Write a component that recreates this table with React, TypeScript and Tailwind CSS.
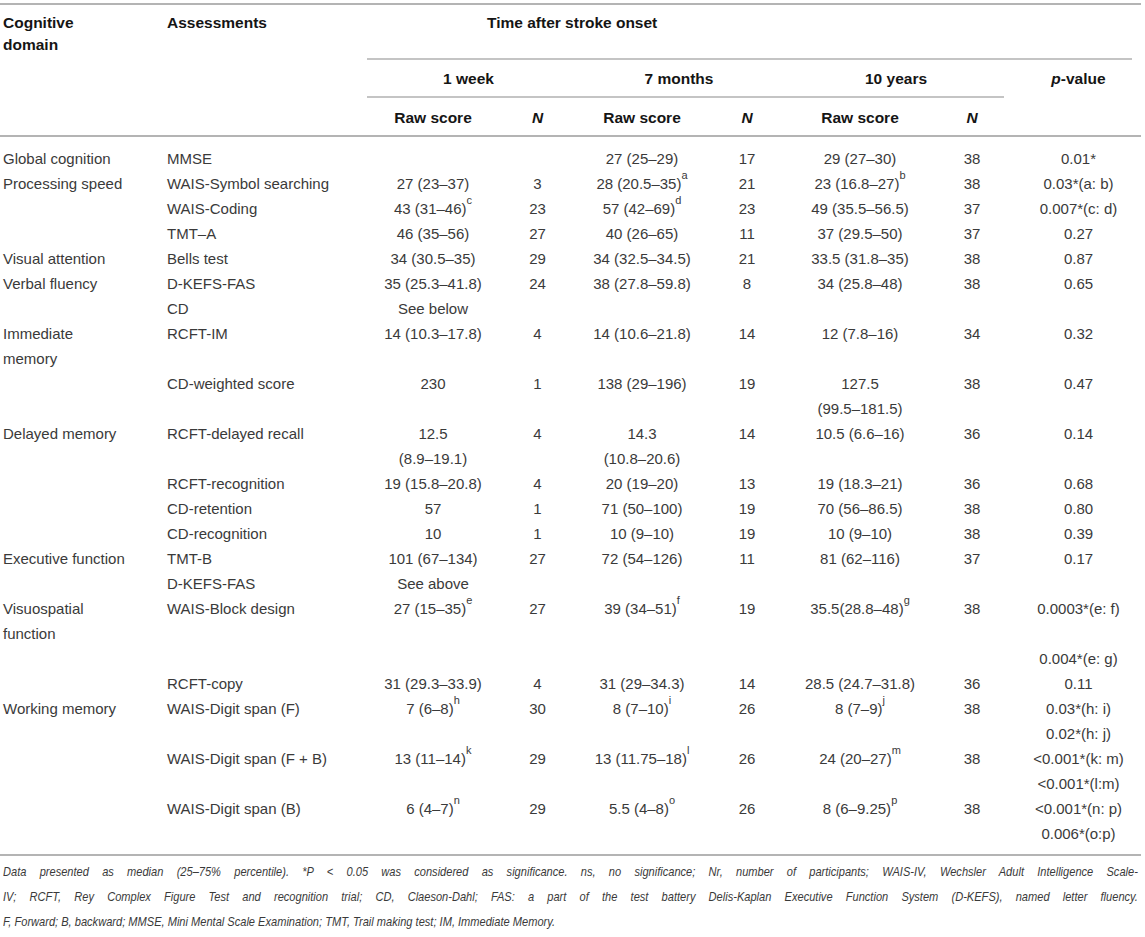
import type { ReactNode } from "react";

const grid =
  "grid grid-cols-[165px_202px_138px_65px_144px_74px_144px_72px_137px]";

type Row = {
  domain?: ReactNode;
  test: ReactNode;
  w1?: ReactNode;
  n1?: ReactNode;
  m7?: ReactNode;
  n7?: ReactNode;
  y10?: ReactNode;
  n10?: ReactNode;
  p?: ReactNode;
};

const S = ({ children }: { children: ReactNode }) => (
  <sup className="text-[11px] leading-none align-[5px]">{children}</sup>
);

const rows: Row[] = [
  { domain: "Global cognition", test: "MMSE", m7: "27 (25–29)", n7: "17", y10: "29 (27–30)", n10: "38", p: "0.01*" },
  {
    domain: "Processing speed",
    test: "WAIS-Symbol searching",
    w1: "27 (23–37)",
    n1: "3",
    m7: <>28 (20.5–35)<S>a</S></>,
    n7: "21",
    y10: <>23 (16.8–27)<S>b</S></>,
    n10: "38",
    p: "0.03*(a: b)",
  },
  {
    test: "WAIS-Coding",
    w1: <>43 (31–46)<S>c</S></>,
    n1: "23",
    m7: <>57 (42–69)<S>d</S></>,
    n7: "23",
    y10: "49 (35.5–56.5)",
    n10: "37",
    p: "0.007*(c: d)",
  },
  { test: "TMT–A", w1: "46 (35–56)", n1: "27", m7: "40 (26–65)", n7: "11", y10: "37 (29.5–50)", n10: "37", p: "0.27" },
  { domain: "Visual attention", test: "Bells test", w1: "34 (30.5–35)", n1: "29", m7: "34 (32.5–34.5)", n7: "21", y10: "33.5 (31.8–35)", n10: "38", p: "0.87" },
  { domain: "Verbal fluency", test: "D-KEFS-FAS", w1: "35 (25.3–41.8)", n1: "24", m7: "38 (27.8–59.8)", n7: "8", y10: "34 (25.8–48)", n10: "38", p: "0.65" },
  { test: "CD", w1: "See below" },
  {
    domain: <>Immediate<br />memory</>,
    test: "RCFT-IM",
    w1: "14 (10.3–17.8)",
    n1: "4",
    m7: "14 (10.6–21.8)",
    n7: "14",
    y10: "12 (7.8–16)",
    n10: "34",
    p: "0.32",
  },
  {
    test: "CD-weighted score",
    w1: "230",
    n1: "1",
    m7: "138 (29–196)",
    n7: "19",
    y10: <>127.5<br />(99.5–181.5)</>,
    n10: "38",
    p: "0.47",
  },
  {
    domain: "Delayed memory",
    test: "RCFT-delayed recall",
    w1: <>12.5<br />(8.9–19.1)</>,
    n1: "4",
    m7: <>14.3<br />(10.8–20.6)</>,
    n7: "14",
    y10: "10.5 (6.6–16)",
    n10: "36",
    p: "0.14",
  },
  { test: "RCFT-recognition", w1: "19 (15.8–20.8)", n1: "4", m7: "20 (19–20)", n7: "13", y10: "19 (18.3–21)", n10: "36", p: "0.68" },
  { test: "CD-retention", w1: "57", n1: "1", m7: "71 (50–100)", n7: "19", y10: "70 (56–86.5)", n10: "38", p: "0.80" },
  { test: "CD-recognition", w1: "10", n1: "1", m7: "10 (9–10)", n7: "19", y10: "10 (9–10)", n10: "38", p: "0.39" },
  { domain: "Executive function", test: "TMT-B", w1: "101 (67–134)", n1: "27", m7: "72 (54–126)", n7: "11", y10: "81 (62–116)", n10: "37", p: "0.17" },
  { test: "D-KEFS-FAS", w1: "See above" },
  {
    domain: <>Visuospatial<br />function</>,
    test: "WAIS-Block design",
    w1: <>27 (15–35)<S>e</S></>,
    n1: "27",
    m7: <>39 (34–51)<S>f</S></>,
    n7: "19",
    y10: <>35.5(28.8–48)<S>g</S></>,
    n10: "38",
    p: <>0.0003*(e: f)<br /><br />0.004*(e: g)</>,
  },
  { test: "RCFT-copy", w1: "31 (29.3–33.9)", n1: "4", m7: "31 (29–34.3)", n7: "14", y10: "28.5 (24.7–31.8)", n10: "36", p: "0.11" },
  {
    domain: "Working memory",
    test: "WAIS-Digit span (F)",
    w1: <>7 (6–8)<S>h</S></>,
    n1: "30",
    m7: <>8 (7–10)<S>i</S></>,
    n7: "26",
    y10: <>8 (7–9)<S>j</S></>,
    n10: "38",
    p: <>0.03*(h: i)<br />0.02*(h: j)</>,
  },
  {
    test: "WAIS-Digit span (F + B)",
    w1: <>13 (11–14)<S>k</S></>,
    n1: "29",
    m7: <>13 (11.75–18)<S>l</S></>,
    n7: "26",
    y10: <>24 (20–27)<S>m</S></>,
    n10: "38",
    p: <>&lt;0.001*(k: m)<br />&lt;0.001*(l:m)</>,
  },
  {
    test: "WAIS-Digit span (B)",
    w1: <>6 (4–7)<S>n</S></>,
    n1: "29",
    m7: <>5.5 (4–8)<S>o</S></>,
    n7: "26",
    y10: <>8 (6–9.25)<S>p</S></>,
    n10: "38",
    p: <>&lt;0.001*(n: p)<br />0.006*(o:p)</>,
  },
];

export default function App() {
  return (
    <div className="w-[1145px] h-[937px] bg-white overflow-hidden pt-[3px] font-['Liberation_Sans',Arial,sans-serif] text-[15px]">
      <div className="w-[1141px]">
        {/* header */}
        <div className="border-t-2 border-b-2 border-[#b4b4b4] text-[#151515] font-bold text-[15.5px] leading-[22px]">
          <div className={grid}>
            <div className="pl-[3px] pt-[7px] pb-[4px]">
              Cognitive
              <br />
              domain
            </div>
            <div className="pl-[2px] pt-[7px]">Assessments</div>
            <div className="col-span-7 mr-[9px] border-b-2 border-[#c4c4c4] pl-[120px] pt-[7px]">
              Time after stroke onset
            </div>
          </div>
          <div className={grid}>
            <div />
            <div />
            <div className="col-span-2 border-b-2 border-[#c4c4c4] pt-[8px] pb-[6px] text-center">1 week</div>
            <div className="col-span-2 border-b-2 border-[#c4c4c4] pt-[8px] pb-[6px] text-center">7 months</div>
            <div className="col-span-2 border-b-2 border-[#c4c4c4] pt-[8px] pb-[6px] text-center">10 years</div>
            <div className="pl-[12px] pt-[8px] text-center">
              <i>p</i>-value
            </div>
          </div>
          <div className={`${grid} pt-[9px] pb-[6px]`}>
            <div />
            <div />
            <div className="pr-[6px] text-center">Raw score</div>
            <div className="text-center italic">N</div>
            <div className="text-center">Raw score</div>
            <div className="pr-[8px] text-center italic">N</div>
            <div className="text-center">Raw score</div>
            <div className="pl-[8px] text-center italic">N</div>
            <div />
          </div>
        </div>

        {/* body */}
        <div className="border-b-2 border-[#b4b4b4] pt-[9px] pb-[8px] text-[#3a3a3a] leading-[25px]">
          {rows.map((r, i) => (
            <div key={i} className={grid}>
              <div className="pl-[3px]">{r.domain}</div>
              <div className="pl-[2px]">{r.test}</div>
              <div className="pr-[6px] text-center">{r.w1}</div>
              <div className="text-center">{r.n1}</div>
              <div className="text-center">{r.m7}</div>
              <div className="pr-[8px] text-center">{r.n7}</div>
              <div className="text-center">{r.y10}</div>
              <div className="pl-[8px] text-center">{r.n10}</div>
              <div className="pl-[12px] text-center">{r.p}</div>
            </div>
          ))}
        </div>

        {/* footnote: condensed italic, squeezed horizontally */}
        <div className="pl-[3px] pt-[3px]">
          <div className="w-[1384px] origin-left scale-x-[0.82] italic text-[13.5px] leading-[25px] text-[#3a3a3a]">
            <div className="whitespace-nowrap text-justify [text-align-last:justify]">
              Data presented as median (25–75% percentile). *P &lt; 0.05 was considered as significance. ns, no significance; Nr, number of participants; WAIS-IV, Wechsler Adult Intelligence Scale-
            </div>
            <div className="whitespace-nowrap text-justify [text-align-last:justify]">
              IV; RCFT, Rey Complex Figure Test and recognition trial; CD, Claeson-Dahl; FAS: a part of the test battery Delis-Kaplan Executive Function System (D-KEFS), named letter fluency.
            </div>
            <div className="whitespace-nowrap">
              F, Forward; B, backward; MMSE, Mini Mental Scale Examination; TMT, Trail making test; IM, Immediate Memory.
            </div>
          </div>
        </div>
      </div>
    </div>
  );
}
